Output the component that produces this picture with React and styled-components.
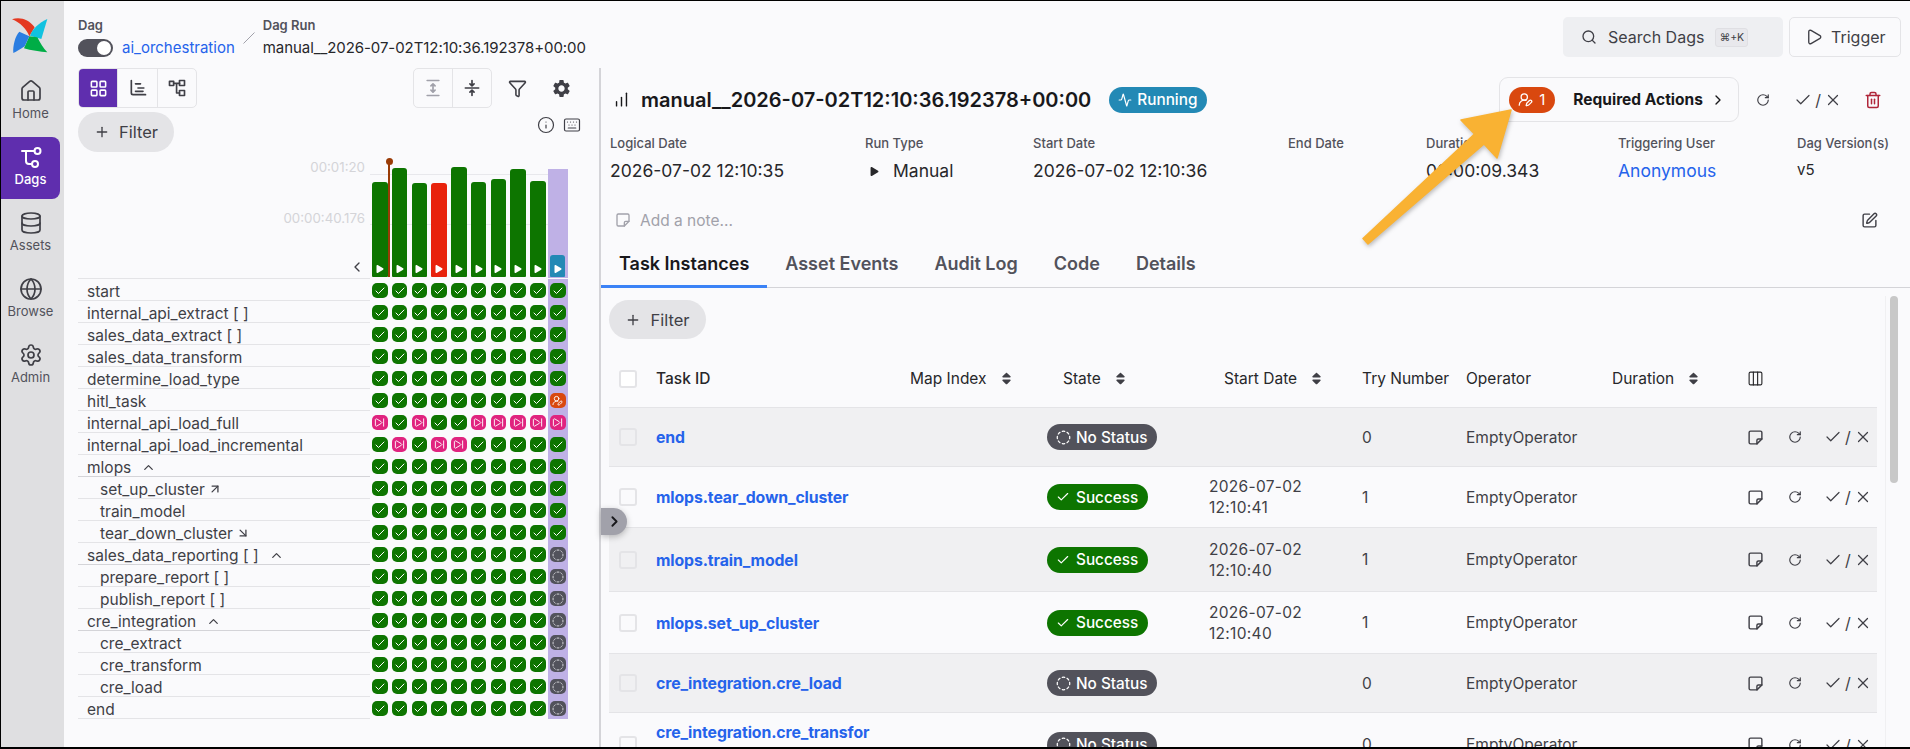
import React from 'react'
import styled, { createGlobalStyle } from 'styled-components'
import {
  House, Database, Globe, Settings, LayoutGrid, Funnel, Info, Keyboard, Plus, Search, Play,
  ChevronLeft, ChevronRight, ChevronUp, RotateCw, Check, X, Trash2, SquarePen,
  Activity, UserRoundPen, Columns3, SkipForward, CircleDashed, ChartNoAxesColumnIncreasing,
  ArrowUpRight, ArrowDownRight,
} from 'lucide-react'
import { FaSort, FaPlay } from 'react-icons/fa'
import { MdSettings } from 'react-icons/md'

const GlobalStyle = createGlobalStyle`
  html, body {
    margin: 0;
    padding: 0;
    background: #fafafc;
    font-family: Inter, "Liberation Sans", sans-serif;
    color: #18181b;
  }
`

const GREEN = '#0d7500'
const RED = '#e8220c'
const BLUE = '#2389b5'
const PURPLE = '#bfb1e6'
const SKIP = '#e0237f'
const ORANGE = '#d9480f'
const SLATE = '#52525b'

// page frame
const Frame = styled.div`
  position: relative;
  box-sizing: border-box;
  display: flex;
  width: 1910px;
  height: 749px;
  overflow: hidden;
  background: #fafafc;
  border-top: 1px solid #000;
  border-left: 1px solid #000;
  border-bottom: 2px solid #000;
`

const Sidebar = styled.nav`
  flex: 0 0 63px;
  display: flex;
  flex-direction: column;
  gap: 4px;
  background: #dfdfe1;
`
const LogoBox = styled.div`
  height: 66px;
  padding: 8px 0 0 3px;
  box-sizing: border-box;
`
const NavItem = styled.div`
  box-sizing: border-box;
  width: 59px;
  height: 62px;
  padding-top: 8px;
  display: flex;
  flex-direction: column;
  align-items: center;
  gap: 3px;
  border-radius: 0 8px 8px 0;
  font-size: 13px;
  line-height: 14px;
  font-weight: ${(p) => (p.$active ? 500 : 400)};
  background: ${(p) => (p.$active ? '#5f2eae' : 'transparent')};
  color: ${(p) => (p.$active ? '#fff' : '#52525b')};
  svg { color: ${(p) => (p.$active ? '#fff' : '#3f3f46')}; }
`

const Main = styled.div`
  flex: 1;
  min-width: 0;
  display: flex;
  flex-direction: column;
`

const TopBar = styled.header`
  flex: 0 0 67px;
  box-sizing: border-box;
  display: flex;
  align-items: flex-start;
  padding: 15px 9px 0 14px;
`
const CrumbBlock = styled.div`
  display: flex;
  flex-direction: column;
  gap: 5px;
`
const CrumbLabel = styled.div`
  font-size: 13px;
  line-height: 18px;
  font-weight: 600;
  color: #52525b;
`
const CrumbValue = styled.div`
  display: flex;
  align-items: center;
  gap: 9px;
  font-size: 15px;
  line-height: 18px;
  white-space: nowrap;
  color: #27272a;
`
const RunCrumb = styled(CrumbValue)`
  letter-spacing: -0.07px;
`
const DagLink = styled.span`
  color: #2563eb;
`
const Toggle = styled.span`
  box-sizing: border-box;
  display: flex;
  justify-content: flex-end;
  align-items: center;
  width: 35px;
  height: 18px;
  padding: 2px;
  border-radius: 9px;
  background: ${SLATE};
  &::after {
    content: '';
    width: 14px;
    height: 14px;
    border-radius: 50%;
    background: #fff;
  }
`
const CrumbSlash = styled.svg`
  flex: none;
  width: 12px;
  height: 12px;
  margin: 16px 8px 0;
`
const SearchBox = styled.div`
  box-sizing: border-box;
  margin: 1px 0 0 auto;
  width: 220px;
  height: 40px;
  display: flex;
  align-items: center;
  padding-left: 18px;
  gap: 11px;
  border-radius: 5px;
  background: #eeeff2;
  font-size: 16px;
  color: #3f3f46;
`
const Kbd = styled.span`
  box-sizing: border-box;
  width: 33px;
  height: 19px;
  display: flex;
  align-items: center;
  justify-content: center;
  font-size: 10.5px;
  border-radius: 3px;
  background: #e8e8ec;
  border: 1px solid #dfdfe3;
`
const TriggerButton = styled.button`
  box-sizing: border-box;
  margin: 1px 0 0 6px;
  width: 112px;
  height: 40px;
  display: flex;
  align-items: center;
  padding: 0 0 0 15px;
  gap: 8px;
  font: inherit;
  font-size: 16px;
  color: #3f3f46;
  background: #fafafc;
  border: 1px solid #e4e4e7;
  border-radius: 5px;
`

const Body = styled.div`
  flex: 1;
  min-height: 0;
  display: flex;
`

// grid panel
const LeftPanel = styled.section`
  flex: 0 0 535px;
  box-sizing: border-box;
  padding-left: 14px;
`
const Toolbar = styled.div`
  height: 40px;
  display: flex;
  align-items: center;
  gap: 8px;
  padding-right: 21px;
`
const ButtonGroup = styled.div`
  display: flex;
  height: 40px;
  margin-left: ${(p) => (p.$right ? 'auto' : '0')};
  border: 1px solid #e4e4e7;
  border-radius: 5px;
  box-sizing: border-box;
  overflow: hidden;
`
const SegmentButton = styled.span`
  width: ${(p) => p.$w || 38}px;
  display: flex;
  align-items: center;
  justify-content: center;
  background: ${(p) => (p.$active ? '#5f2eae' : 'transparent')};
  color: ${(p) => (p.$active ? '#fff' : p.$muted ? '#a1a1aa' : '#3f3f46')};
  & + & { border-left: 1px solid #e4e4e7; }
`
const IconButton = styled.span`
  width: 34px;
  height: 34px;
  display: flex;
  align-items: center;
  justify-content: center;
  color: #3f3f46;
  & + & { margin-left: 2px; }
`
const FilterRow = styled.div`
  margin-top: 4px;
  display: flex;
  justify-content: space-between;
  padding-right: 18px;
`
const FilterPill = styled.button`
  box-sizing: border-box;
  width: ${(p) => p.$w}px;
  height: ${(p) => p.$hh}px;
  display: flex;
  align-items: center;
  justify-content: center;
  gap: 9px;
  border: 0;
  border-radius: 20px;
  background: #e4e4e7;
  font: inherit;
  font-size: 16.5px;
  color: #3f3f46;
`
const HelpIcons = styled.div`
  display: flex;
  gap: 8px;
  margin-top: 4px;
  color: #3f3f46;
`

const Chart = styled.div`
  height: 127px;
  display: flex;
`
const AxisCol = styled.div`
  position: relative;
  flex: 0 0 292px;
  box-sizing: border-box;
  border-bottom: 1px solid #e4e4e7;
`
const AxisLabel = styled.span`
  position: absolute;
  right: 5px;
  top: ${(p) => p.$top}px;
  font-size: 13.3px;
  line-height: 18px;
  color: #d4d4d8;
`
const Collapse = styled.span`
  position: absolute;
  right: 5px;
  bottom: 3px;
  display: flex;
  color: #3f3f46;
`
const BarGrid = styled.div`
  position: relative;
  display: grid;
  grid-template-columns: repeat(10, 19.75px);
  align-items: end;
  justify-items: center;
  padding-bottom: 1px;
  box-sizing: border-box;
`
const GridLine = styled.div`
  position: absolute;
  left: 0;
  width: 178px;
  top: ${(p) => p.$top}px;
  height: 1px;
  background: #e8e8ec;
`
const RunBar = styled.div`
  position: relative;
  width: 15.5px;
  height: ${(p) => p.$h}px;
  margin-bottom: 1px;
  display: flex;
  align-items: flex-end;
  justify-content: center;
  padding-bottom: 4px;
  box-sizing: border-box;
  border-radius: 3px 3px 1px 1px;
  background: ${(p) => p.$color};
  color: #fff;
`
const ActiveColumn = styled.div`
  justify-self: stretch;
  height: 109px;
  display: flex;
  align-items: flex-end;
  justify-content: center;
  background: ${PURPLE};
`
const Marker = styled.div`
  position: absolute;
  left: 18px;
  top: 10px;
  width: 2px;
  height: 115px;
  background: #9a3b06;
  &::before {
    content: '';
    position: absolute;
    left: -2.5px;
    top: -4px;
    width: 7px;
    height: 7px;
    border-radius: 50%;
    background: #9a3b06;
  }
`
const TaskRow = styled.div`
  display: flex;
  height: 22px;
`
const TaskName = styled.div`
  flex: 0 0 292px;
  box-sizing: border-box;
  display: flex;
  align-items: center;
  gap: ${(p) => (p.$group ? 10 : 3)}px;
  padding: 3px 0 0 ${(p) => (p.$child ? 22 : 9)}px;
  font-size: 15.5px;
  white-space: nowrap;
  color: #3f3f46;
  border-bottom: 1px solid ${(p) => (p.$group ? '#d4d4d8' : '#e4e4e7')};
`
const CellGrid = styled.div`
  display: grid;
  grid-template-columns: repeat(10, 19.75px);
  align-items: center;
  justify-items: center;
`
const CellSlot = styled.div`
  box-sizing: border-box;
  align-self: stretch;
  justify-self: stretch;
  padding-top: 1px;
  display: flex;
  align-items: center;
  justify-content: center;
  background: ${(p) => (p.$active ? PURPLE : 'transparent')};
`
const StateCell = styled.span`
  width: ${(p) => (p.$active ? 16 : 15.5)}px;
  height: 15.5px;
  display: flex;
  align-items: center;
  justify-content: center;
  border-radius: 5px;
  background: ${(p) => p.$color};
  color: #fff;
`

// run details panel
const RightPanel = styled.section`
  position: relative;
  flex: 1;
  min-width: 0;
  box-sizing: border-box;
  border-left: 2px solid #d4d4d8;
`
const RunHeader = styled.div`
  height: 45px;
  margin-top: 9px;
  display: flex;
  align-items: center;
  padding-left: 12px;
`
const RunTitle = styled.h1`
  margin: 0 0 0 11px;
  font-size: 20px;
  font-weight: 600;
  white-space: nowrap;
  color: #18181b;
`
const StatusBadge = styled.span`
  box-sizing: border-box;
  display: inline-flex;
  align-items: center;
  gap: ${(p) => p.$gap || 5}px;
  height: 26px;
  padding: 0 ${(p) => p.$pad || 10}px 0 ${(p) => p.$padLeft || 9}px;
  border-radius: 13px;
  background: ${(p) => p.$color};
  color: #fff;
  font-size: 15.3px;
  font-weight: 500;
  white-space: nowrap;
`
const RunningBadge = styled(StatusBadge)`
  margin-left: 18px;
`
const RequiredActions = styled.button`
  box-sizing: border-box;
  margin-left: auto;
  width: 240px;
  height: 45px;
  display: flex;
  align-items: center;
  padding: 0 12px 0 9px;
  font: inherit;
  font-size: 15.5px;
  font-weight: 700;
  white-space: nowrap;
  color: #18181b;
  background: transparent;
  border: 1px solid #e4e4e7;
  border-radius: 9px;
`
const ActionCount = styled(StatusBadge)`
  margin-right: 18px;
  font-weight: 400;
  font-size: 15px;
`
const RunActions = styled.div`
  display: flex;
  align-items: center;
  margin: 0 28px 0 17px;
  color: #3f3f46;
`
const MarkAs = styled.span`
  display: flex;
  align-items: center;
  gap: 3px;
  margin-left: ${(p) => p.$left}px;
  font-size: 16px;
  color: #3f3f46;
`
const TrashIcon = styled(Trash2)`
  margin-left: 22px;
  color: #b0263a;
`
const Details = styled.div`
  margin-top: 12px;
  padding-left: 9px;
  display: grid;
  grid-template-columns: 255px 168px 255px 138px 192px 179px auto;
`
const DetailLabel = styled.div`
  font-size: 13px;
  line-height: 18px;
  font-weight: 500;
  color: #52525b;
  white-space: nowrap;
`
const DetailValue = styled.div`
  margin-top: ${(p) => (p.$size ? 8 : 9)}px;
  display: flex;
  align-items: center;
  gap: 14px;
  font-size: ${(p) => p.$size || 17.5}px;
  line-height: 20px;
  white-space: nowrap;
  color: ${(p) => (p.$link ? '#2563eb' : '#27272a')};
`
const NoteRow = styled.div`
  margin-top: 27px;
  height: 24px;
  display: flex;
  align-items: center;
  gap: 9px;
  padding: 0 32px 0 14px;
  font-size: 15.5px;
  color: #a1a1aa;
`
const NoteEdit = styled(SquarePen)`
  margin-left: auto;
  color: #3f3f46;
`
const TabBar = styled.div`
  margin-top: 18px;
  display: flex;
  box-shadow: inset 0 -1px 0 #d4d4d8;
  height: 38px;
`
const Tab = styled.div`
  box-sizing: border-box;
  height: 38px;
  padding: 0 18px;
  font-size: 18px;
  line-height: 28px;
  font-weight: 600;
  white-space: nowrap;
  color: ${(p) => (p.$active ? '#18181b' : '#52525b')};
  border-bottom: 3px solid ${(p) => (p.$active ? '#3b82f6' : 'transparent')};
`
const TableArea = styled.div`
  width: 1268px;
  margin: 12px 0 0 8px;
`
const COLUMNS = '47px 254px 137px 162px 153px 104px 146px 133px 132px'
const TableHead = styled.div`
  display: grid;
  grid-template-columns: ${COLUMNS};
  align-items: center;
  height: 69px;
  padding-top: 11px;
  box-sizing: border-box;
  font-size: 15.5px;
  color: #27272a;
  border-bottom: 1px solid #e4e4e7;
`
const HeadCell = styled.div`
  display: flex;
  align-items: center;
  gap: 12px;
  padding-left: ${(p) => p.$indent || 0}px;
  white-space: nowrap;
  font-weight: ${(p) => (p.$dark ? 500 : 400)};
`
const SortIcon = styled(FaSort)`
  width: 15px;
  height: 15px;
  color: #3f3f46;
`
const TableRow = styled.div`
  display: grid;
  grid-template-columns: ${COLUMNS};
  align-items: center;
  height: ${(p) => p.$h}px;
  box-sizing: border-box;
  font-size: 15.5px;
  color: #3f3f46;
  background: ${(p) => (p.$striped ? '#f0f0f2' : 'transparent')};
  border-bottom: 1px solid #e4e4e7;
`
const Checkbox = styled.span`
  box-sizing: border-box;
  display: block;
  width: 18px;
  height: 18px;
  margin-left: 10px;
  border-radius: 3px;
  border: 2px solid #e4e4e7;
  background: ${(p) => (p.$bright ? '#fff' : 'transparent')};
`
const TaskLink = styled.a`
  max-width: 218px;
  font-size: 15.8px;
  line-height: 22px;
  font-weight: 700;
  letter-spacing: -0.1px;
  color: #2563eb;
  overflow-wrap: anywhere;
  align-self: ${(p) => (p.$wrapped ? 'start' : 'auto')};
  margin-top: ${(p) => (p.$wrapped ? 9 : 2)}px;
`
const DateCell = styled.div`
  width: 100px;
  font-size: 15.5px;
  line-height: 21px;
  letter-spacing: 0.3px;
`
const RowActions = styled.div`
  display: flex;
  align-items: center;
  gap: 22px;
  padding-left: 2px;
  color: #3f3f46;
`
const RowRefresh = styled(RotateCw)`
  margin-left: 2px;
`
const ExpandHandle = styled.div`
  position: absolute;
  left: 0;
  top: 440px;
  width: 26px;
  height: 27px;
  display: flex;
  align-items: center;
  justify-content: center;
  border-radius: 0 14px 14px 0;
  background: #a1a1aa;
  box-shadow: 0 2px 6px rgba(0, 0, 0, 0.25);
  color: #18181b;
`
const ScrollTrack = styled.div`
  position: absolute;
  left: 1284px;
  top: 228px;
  bottom: 0;
  width: 1px;
  background: #f0f0f2;
`
const ScrollThumb = styled.div`
  position: absolute;
  left: 1289px;
  top: 228px;
  width: 8px;
  height: 187px;
  border-radius: 4px;
  background: #c8c8c8;
`
const ArrowOverlay = styled.svg`
  position: absolute;
  left: 0;
  top: -1px;
  width: 1910px;
  height: 749px;
  pointer-events: none;
  filter: drop-shadow(1px 2px 2px rgba(0, 0, 0, 0.25));
`

const Logo = () => (
  <svg width="56" height="56" viewBox="0 0 168 168">
    <path fill="#e43921" d="M24 31C45 22 75 30 92 55L76 82C68 60 48 40 24 31Z" />
    <path fill="#11c2e0" d="M130 30L112 90L78 80C85 60 105 42 130 30Z" />
    <path fill="#00ad46" d="M130 130C110 128 80 125 60 118L76 82L100 85C108 100 118 118 130 130Z" />
    <path fill="#2a7de1" d="M28 132C26 110 34 80 46 68L76 82L62 112C50 120 38 128 28 132Z" />
  </svg>
)

const line = { fill: 'none', stroke: 'currentColor', strokeWidth: 2, strokeLinecap: 'round', strokeLinejoin: 'round' }

const DagIcon = () => (
  <svg width="24" height="24" viewBox="0 0 24 24" {...line}>
    <circle cx="18.5" cy="6" r="3" />
    <circle cx="16" cy="19" r="3" />
    <path d="M3 6h12.5M7 6v10a3 3 0 0 0 3 3h3" />
  </svg>
)
const GanttIcon = () => (
  <svg width="20" height="20" viewBox="0 0 24 24" {...line}>
    <path d="M4 3v15a2 2 0 0 0 2 2h15M9 7h6M12 12h7M9 16h9" />
  </svg>
)
const GraphIcon = () => (
  <svg width="20" height="20" viewBox="0 0 24 24" {...line}>
    <rect x="3" y="4" width="5" height="5" />
    <rect x="15" y="3" width="6" height="6" />
    <rect x="15" y="15" width="6" height="6" />
    <path d="M8 6.5h7M11.5 6.5V18H15" />
  </svg>
)
const ExpandAllIcon = () => (
  <svg width="20" height="20" viewBox="0 0 24 24" {...line}>
    <path d="M5 3h14M5 21h14M12 7v10M9.5 9.5L12 7l2.5 2.5M9.5 14.5L12 17l2.5-2.5" />
  </svg>
)
const CollapseAllIcon = () => (
  <svg width="20" height="20" viewBox="0 0 24 24" {...line}>
    <path d="M4 12h16M12 3v6M9.5 7L12 9.5 14.5 7M12 21v-6M9.5 17L12 14.5l2.5 2.5" />
  </svg>
)
// note with the fold in the bottom right corner
const NoteIcon = ({ size = 17 }) => (
  <svg width={size} height={size} viewBox="0 0 24 24" {...line}>
    <path d="M3 5a2 2 0 0 1 2-2h14a2 2 0 0 1 2 2v9l-7 7H5a2 2 0 0 1-2-2z" />
    <path d="M14 21v-5a2 2 0 0 1 2-2h5" />
  </svg>
)

const runs = [
  { h: 95, color: GREEN },
  { h: 109, color: GREEN },
  { h: 94, color: GREEN },
  { h: 94, color: RED },
  { h: 110, color: GREEN },
  { h: 95, color: GREEN },
  { h: 98, color: GREEN },
  { h: 108, color: GREEN },
  { h: 96, color: GREEN },
]

const s = 'success'
const k = 'skipped'
const allOk = [s, s, s, s, s, s, s, s, s, s]
const lastNone = [s, s, s, s, s, s, s, s, s, 'none']

const tasks = [
  { name: 'start', cells: allOk },
  { name: 'internal_api_extract [ ]', cells: allOk },
  { name: 'sales_data_extract [ ]', cells: allOk },
  { name: 'sales_data_transform', cells: allOk },
  { name: 'determine_load_type', cells: allOk },
  { name: 'hitl_task', cells: [s, s, s, s, s, s, s, s, s, 'action'] },
  { name: 'internal_api_load_full', cells: [k, s, k, s, s, k, k, k, k, k] },
  { name: 'internal_api_load_incremental', cells: [s, k, s, k, k, s, s, s, s, s] },
  { name: 'mlops', group: true, cells: allOk },
  { name: 'set_up_cluster', child: true, arrow: 'up', cells: allOk },
  { name: 'train_model', child: true, cells: allOk },
  { name: 'tear_down_cluster', child: true, arrow: 'down', cells: allOk },
  { name: 'sales_data_reporting [ ]', group: true, cells: lastNone },
  { name: 'prepare_report [ ]', child: true, cells: lastNone },
  { name: 'publish_report [ ]', child: true, cells: lastNone },
  { name: 'cre_integration', group: true, cells: lastNone },
  { name: 'cre_extract', child: true, cells: lastNone },
  { name: 'cre_transform', child: true, cells: lastNone },
  { name: 'cre_load', child: true, cells: lastNone },
  { name: 'end', cells: lastNone },
]

const cellLook = {
  success: { color: GREEN, icon: <Check size={12} strokeWidth={2} /> },
  skipped: { color: SKIP, icon: <SkipForward size={11} /> },
  action: { color: ORANGE, icon: <UserRoundPen size={11} /> },
  none: { color: SLATE, icon: <CircleDashed size={12} color="#d4d4d8" /> },
}

const instances = [
  { id: 'end', state: 'none', tries: 0, h: 59, striped: true },
  { id: 'mlops.tear_down_cluster', state: 'success', date: '12:10:41', tries: 1, h: 61 },
  { id: 'mlops.train_model', state: 'success', date: '12:10:40', tries: 1, h: 64, striped: true },
  { id: 'mlops.set_up_cluster', state: 'success', date: '12:10:40', tries: 1, h: 62 },
  { id: 'cre_integration.cre_load', state: 'none', tries: 0, h: 59, striped: true },
  { id: 'cre_integration.cre_transform', state: 'none', tries: 0, h: 64, wrapped: true },
]

function StatePill({ state }) {
  if (state === 'success') {
    return (
      <StatusBadge $color={GREEN} $gap={6}>
        <Check size={14} />
        Success
      </StatusBadge>
    )
  }
  return (
    <StatusBadge $color={SLATE}>
      <CircleDashed size={15} />
      No Status
    </StatusBadge>
  )
}

export default function App() {
  return (
    <>
      <GlobalStyle />
      <Frame>
        <Sidebar>
          <LogoBox><Logo /></LogoBox>
          <NavItem><House size={24} strokeWidth={1.7} />Home</NavItem>
          <NavItem $active><DagIcon />Dags</NavItem>
          <NavItem><Database size={24} strokeWidth={1.7} />Assets</NavItem>
          <NavItem><Globe size={24} strokeWidth={1.7} />Browse</NavItem>
          <NavItem><Settings size={24} strokeWidth={1.7} />Admin</NavItem>
        </Sidebar>

        <Main>
          <TopBar>
            <CrumbBlock>
              <CrumbLabel>Dag</CrumbLabel>
              <CrumbValue><Toggle /><DagLink>ai_orchestration</DagLink></CrumbValue>
            </CrumbBlock>
            <CrumbSlash viewBox="0 0 12 12">
              <path d="M0.5 11.5L11.5 0.5" stroke="#a1a1aa" />
            </CrumbSlash>
            <CrumbBlock>
              <CrumbLabel>Dag Run</CrumbLabel>
              <RunCrumb>manual__2026-07-02T12:10:36.192378+00:00</RunCrumb>
            </CrumbBlock>
            <SearchBox>
              <Search size={16} />
              Search Dags
              <Kbd>⌘+K</Kbd>
            </SearchBox>
            <TriggerButton><Play size={18} strokeWidth={1.8} />Trigger</TriggerButton>
          </TopBar>

          <Body>
            <LeftPanel>
              <Toolbar>
                <ButtonGroup>
                  <SegmentButton $active><LayoutGrid size={19} /></SegmentButton>
                  <SegmentButton $w={39}><GanttIcon /></SegmentButton>
                  <SegmentButton $w={38}><GraphIcon /></SegmentButton>
                </ButtonGroup>
                <ButtonGroup $right>
                  <SegmentButton $w={38} $muted><ExpandAllIcon /></SegmentButton>
                  <SegmentButton $w={38}><CollapseAllIcon /></SegmentButton>
                </ButtonGroup>
                <IconButton><Funnel size={19} /></IconButton>
                <IconButton><MdSettings size={21} /></IconButton>
              </Toolbar>
              <FilterRow>
                <FilterPill $w={96} $hh={40}><Plus size={16} />Filter</FilterPill>
                <HelpIcons>
                  <Info size={18} strokeWidth={1.6} />
                  <Keyboard size={18} strokeWidth={1.6} />
                </HelpIcons>
              </FilterRow>

              <Chart>
                <AxisCol>
                  <AxisLabel $top={6}>00:01:20</AxisLabel>
                  <AxisLabel $top={57}>00:00:40.176</AxisLabel>
                  <Collapse><ChevronLeft size={16} /></Collapse>
                </AxisCol>
                <BarGrid>
                  <GridLine $top={22} />
                  <GridLine $top={72} />
                  {runs.map((run, i) => (
                    <RunBar key={i} $h={run.h} $color={run.color}>
                      <FaPlay size={8} />
                    </RunBar>
                  ))}
                  <ActiveColumn>
                    <RunBar $h={22} $color={BLUE}><FaPlay size={8} /></RunBar>
                  </ActiveColumn>
                  <Marker />
                </BarGrid>
              </Chart>

              {tasks.map((task) => (
                <TaskRow key={task.name}>
                  <TaskName $child={task.child} $group={task.group}>
                    {task.name}
                    {task.group && <ChevronUp size={15} />}
                    {task.arrow === 'up' && <ArrowUpRight size={14} strokeWidth={2.2} />}
                    {task.arrow === 'down' && <ArrowDownRight size={14} strokeWidth={2.2} />}
                  </TaskName>
                  <CellGrid>
                    {task.cells.map((cell, i) => (
                      <CellSlot key={i} $active={i === 9}>
                        <StateCell $active={i === 9} $color={cellLook[cell].color}>
                          {cellLook[cell].icon}
                        </StateCell>
                      </CellSlot>
                    ))}
                  </CellGrid>
                </TaskRow>
              ))}
            </LeftPanel>

            <RightPanel>
              <RunHeader>
                <ChartNoAxesColumnIncreasing size={17} />
                <RunTitle>manual__2026-07-02T12:10:36.192378+00:00</RunTitle>
                <RunningBadge $color={BLUE}>
                  <Activity size={14} />
                  Running
                </RunningBadge>
                <RequiredActions>
                  <ActionCount $color={ORANGE} $padLeft={9} $pad={10} $gap={6}>
                    <UserRoundPen size={15} />
                    1
                  </ActionCount>
                  Required Actions
                  <ChevronRight size={16} style={{ marginLeft: 'auto' }} />
                </RequiredActions>
                <RunActions>
                  <RotateCw size={14} />
                  <MarkAs $left={24}><Check size={18} strokeWidth={1.6} />/<X size={18} strokeWidth={1.6} /></MarkAs>
                  <TrashIcon size={18} />
                </RunActions>
              </RunHeader>

              <Details>
                <div><DetailLabel>Logical Date</DetailLabel><DetailValue>2026-07-02 12:10:35</DetailValue></div>
                <div><DetailLabel>Run Type</DetailLabel><DetailValue><FaPlay size={9} style={{ marginLeft: 5 }} />Manual</DetailValue></div>
                <div><DetailLabel>Start Date</DetailLabel><DetailValue>2026-07-02 12:10:36</DetailValue></div>
                <div><DetailLabel>End Date</DetailLabel></div>
                <div><DetailLabel>Duration</DetailLabel><DetailValue>00:00:09.343</DetailValue></div>
                <div><DetailLabel>Triggering User</DetailLabel><DetailValue $link>Anonymous</DetailValue></div>
                <div><DetailLabel>Dag Version(s)</DetailLabel><DetailValue $size={15}>v5</DetailValue></div>
              </Details>

              <NoteRow>
                <NoteIcon size={16} />
                Add a note...
                <NoteEdit size={17} />
              </NoteRow>

              <TabBar>
                <Tab $active>Task Instances</Tab>
                <Tab>Asset Events</Tab>
                <Tab>Audit Log</Tab>
                <Tab>Code</Tab>
                <Tab>Details</Tab>
              </TabBar>

              <TableArea>
                <FilterPill $w={97} $hh={39}><Plus size={16} />Filter</FilterPill>
                <TableHead>
                  <Checkbox $bright />
                  <HeadCell $dark>Task ID</HeadCell>
                  <HeadCell>Map Index <SortIcon /></HeadCell>
                  <HeadCell $indent={16}>State <SortIcon /></HeadCell>
                  <HeadCell $indent={15}>Start Date <SortIcon /></HeadCell>
                  <HeadCell>Try Number</HeadCell>
                  <HeadCell>Operator</HeadCell>
                  <HeadCell>Duration <SortIcon /></HeadCell>
                  <HeadCell $indent={2}><Columns3 size={17} strokeWidth={1.6} /></HeadCell>
                </TableHead>
                {instances.map((row) => (
                  <TableRow key={row.id} $h={row.h} $striped={row.striped}>
                    <Checkbox />
                    <TaskLink $wrapped={row.wrapped}>{row.id}</TaskLink>
                    <span />
                    <span><StatePill state={row.state} /></span>
                    <div>{row.date && <DateCell>2026-07-02 {row.date}</DateCell>}</div>
                    <span>{row.tries}</span>
                    <span>EmptyOperator</span>
                    <span />
                    <RowActions>
                      <NoteIcon />
                      <RowRefresh size={14} />
                      <MarkAs $left={0}><Check size={18} strokeWidth={1.6} />/<X size={18} strokeWidth={1.6} /></MarkAs>
                    </RowActions>
                  </TableRow>
                ))}
              </TableArea>

              <ExpandHandle><ChevronRight size={17} strokeWidth={2.6} /></ExpandHandle>
              <ScrollTrack />
              <ScrollThumb />
            </RightPanel>
          </Body>
        </Main>

        {/* annotation arrow pointing at the required actions badge */}
        <ArrowOverlay viewBox="0 0 1910 749">
          <path
            d="M1510 110L1460 120L1473.5 134L1362 238.5L1367 244L1483 144L1496 158Z"
            fill="#f9b233"
            stroke="#f9b233"
            strokeWidth="1.5"
            strokeLinejoin="round"
          />
        </ArrowOverlay>
      </Frame>
    </>
  )
}
